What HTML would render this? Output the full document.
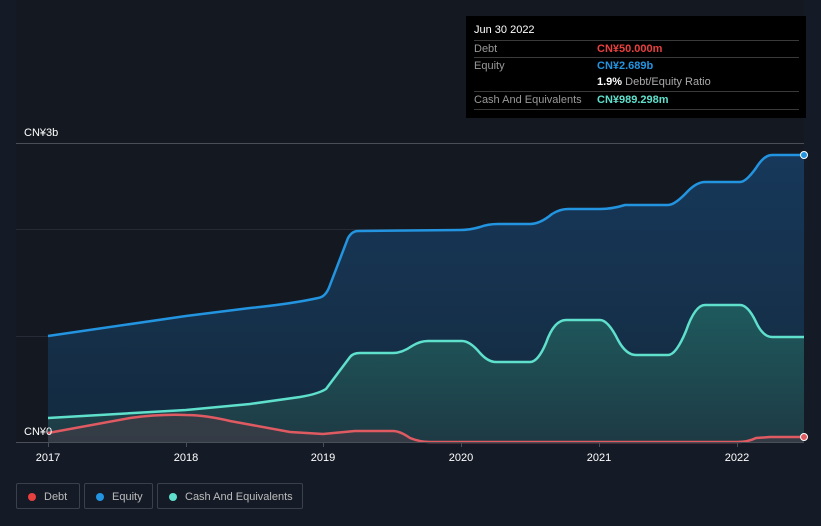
<!DOCTYPE html>
<html><head><meta charset="utf-8"><style>
body{margin:0;width:821px;height:526px;background:#151b26;font-family:"Liberation Sans","Noto Sans CJK SC",sans-serif;overflow:hidden;position:relative}
.tip{position:absolute;left:466px;top:16px;width:340px;height:102px;background:#000;color:#fff;font-size:11px}
.tip .r{position:absolute;left:8px;width:325px;border-top:1px solid #3a3a3a;height:17px;line-height:17px}
.tip .l{color:#999}
.tip .v{position:absolute;left:123px;top:0;font-weight:bold}
.leg{position:absolute;top:483px;height:26px;border:1px solid #3b414c;border-radius:2px;color:#bbb;font-size:11px;line-height:26px;box-sizing:border-box}
.leg i{display:inline-block;width:8px;height:8px;border-radius:50%;margin:0 8px 0 11px;vertical-align:-1px}
</style></head><body>
<svg width="821" height="526" style="position:absolute;left:0;top:0">
<defs>
<linearGradient id="eg" x1="0" y1="0" x2="0" y2="1"><stop offset="0" stop-color="#17385a"/><stop offset="1" stop-color="#142a3e"/></linearGradient>
<linearGradient id="cg" x1="0" y1="0" x2="0" y2="1"><stop offset="0" stop-color="#1e5a5e"/><stop offset="1" stop-color="#1e3a44"/></linearGradient>
</defs>
<rect x="16" y="0" width="788" height="442" fill="#141820"/>
<line x1="16" y1="143.5" x2="804" y2="143.5" stroke="#4a4e56"/>
<line x1="16" y1="229.5" x2="804" y2="229.5" stroke="#262b35"/>
<line x1="16" y1="336.5" x2="804" y2="336.5" stroke="#262b35"/>
<path d="M48,336 L186,316 L250,308 C280,305 300,302 318,298 Q326,297 330,285 L348,238 Q352,231 358,231 L460,230 Q470,230 480,227 Q488,224 498,224 L530,224 Q540,224 552,214 Q560,209 568,209 L600,209 Q612,209 625,205 L668,205 Q675,205 688,191 Q697,182 705,182 L740,182 Q746,182 756,168 Q764,155 772,155 L804,155 L804,442 L48,442Z" fill="url(#eg)"/>
<path d="M48,418 L186,410 L250,404 L300,397 Q318,394 326,389 L350,357 Q353,353 360,353 L393,353 Q402,353 412,346 Q420,341 428,341 L462,341 Q470,341 480,353 Q488,362 496,362 L530,362 Q538,362 546,343 Q554,320 566,320 L600,320 Q608,320 618,340 Q626,355 636,355 L668,355 Q676,355 686,331 Q695,305 705,305 L740,305 Q748,305 756,322 Q763,337 772,337 L804,337 L804,442 L48,442Z" fill="url(#cg)"/>
<path d="M48,433 L130,418 Q160,414 186,415 Q205,415 230,421 L290,432 L323,434 L355,431 L393,431 Q400,431 410,438 Q420,442 430,442 L737,442 Q748,442 756,438 L770,437 L804,437 L804,442 L48,442Z" fill="#3a3c46" opacity="0.8"/>
<path d="M48,336 L186,316 L250,308 C280,305 300,302 318,298 Q326,297 330,285 L348,238 Q352,231 358,231 L460,230 Q470,230 480,227 Q488,224 498,224 L530,224 Q540,224 552,214 Q560,209 568,209 L600,209 Q612,209 625,205 L668,205 Q675,205 688,191 Q697,182 705,182 L740,182 Q746,182 756,168 Q764,155 772,155 L804,155" fill="none" stroke="#2394e0" stroke-width="2.5"/>
<path d="M48,418 L186,410 L250,404 L300,397 Q318,394 326,389 L350,357 Q353,353 360,353 L393,353 Q402,353 412,346 Q420,341 428,341 L462,341 Q470,341 480,353 Q488,362 496,362 L530,362 Q538,362 546,343 Q554,320 566,320 L600,320 Q608,320 618,340 Q626,355 636,355 L668,355 Q676,355 686,331 Q695,305 705,305 L740,305 Q748,305 756,322 Q763,337 772,337 L804,337" fill="none" stroke="#5fe0cc" stroke-width="2.5"/>
<path d="M48,433 L130,418 Q160,414 186,415 Q205,415 230,421 L290,432 L323,434 L355,431 L393,431 Q400,431 410,438 Q420,442 430,442 L737,442 Q748,442 756,438 L770,437 L804,437" fill="none" stroke="#e05a62" stroke-width="2.5"/>
<line x1="16" y1="442.5" x2="804" y2="442.5" stroke="#4a4e56"/>
<g stroke="#4a4e56"><line x1="48.5" y1="442" x2="48.5" y2="447"/><line x1="186.5" y1="442" x2="186.5" y2="447"/><line x1="323.5" y1="442" x2="323.5" y2="447"/><line x1="461.5" y1="442" x2="461.5" y2="447"/><line x1="599.5" y1="442" x2="599.5" y2="447"/><line x1="737.5" y1="442" x2="737.5" y2="447"/></g>
<circle cx="804" cy="155" r="3.5" fill="#2394e0" stroke="#fff" stroke-width="1"/>
<circle cx="804" cy="437" r="3.5" fill="#e05a62" stroke="#fff" stroke-width="1"/>
<g fill="#fff" font-size="11" font-family="Liberation Sans, Noto Sans CJK SC, sans-serif">
<text x="24" y="136">CN¥3b</text>
<text x="24" y="435">CN¥0</text>
<g text-anchor="middle"><text x="48" y="461">2017</text><text x="186" y="461">2018</text><text x="323" y="461">2019</text><text x="461" y="461">2020</text><text x="599" y="461">2021</text><text x="737" y="461">2022</text></g>
</g>
</svg>
<div class="tip">
<div style="position:absolute;left:8px;top:8px;font-size:11px">Jun 30 2022</div>
<div class="r" style="top:24px"><span class="l">Debt</span><span class="v" style="color:#e8403f">CN¥50.000m</span></div>
<div class="r" style="top:41px"><span class="l">Equity</span><span class="v" style="color:#2394e0">CN¥2.689b</span></div>
<div class="r" style="top:58px;border-top:none"><span class="v" style="font-weight:normal;color:#aaa"><b style="color:#fff">1.9%</b> Debt/Equity Ratio</span></div>
<div class="r" style="top:75px;border-bottom:1px solid #3a3a3a"><span class="l">Cash And Equivalents</span><span class="v" style="color:#5fe0cc">CN¥989.298m</span></div>
</div>
<div class="leg" style="left:16px;width:64px"><i style="background:#e8403f"></i>Debt</div>
<div class="leg" style="left:84px;width:69px"><i style="background:#2394e0"></i>Equity</div>
<div class="leg" style="left:157px;width:146px"><i style="background:#5fe0cc"></i>Cash And Equivalents</div>
</body></html>
